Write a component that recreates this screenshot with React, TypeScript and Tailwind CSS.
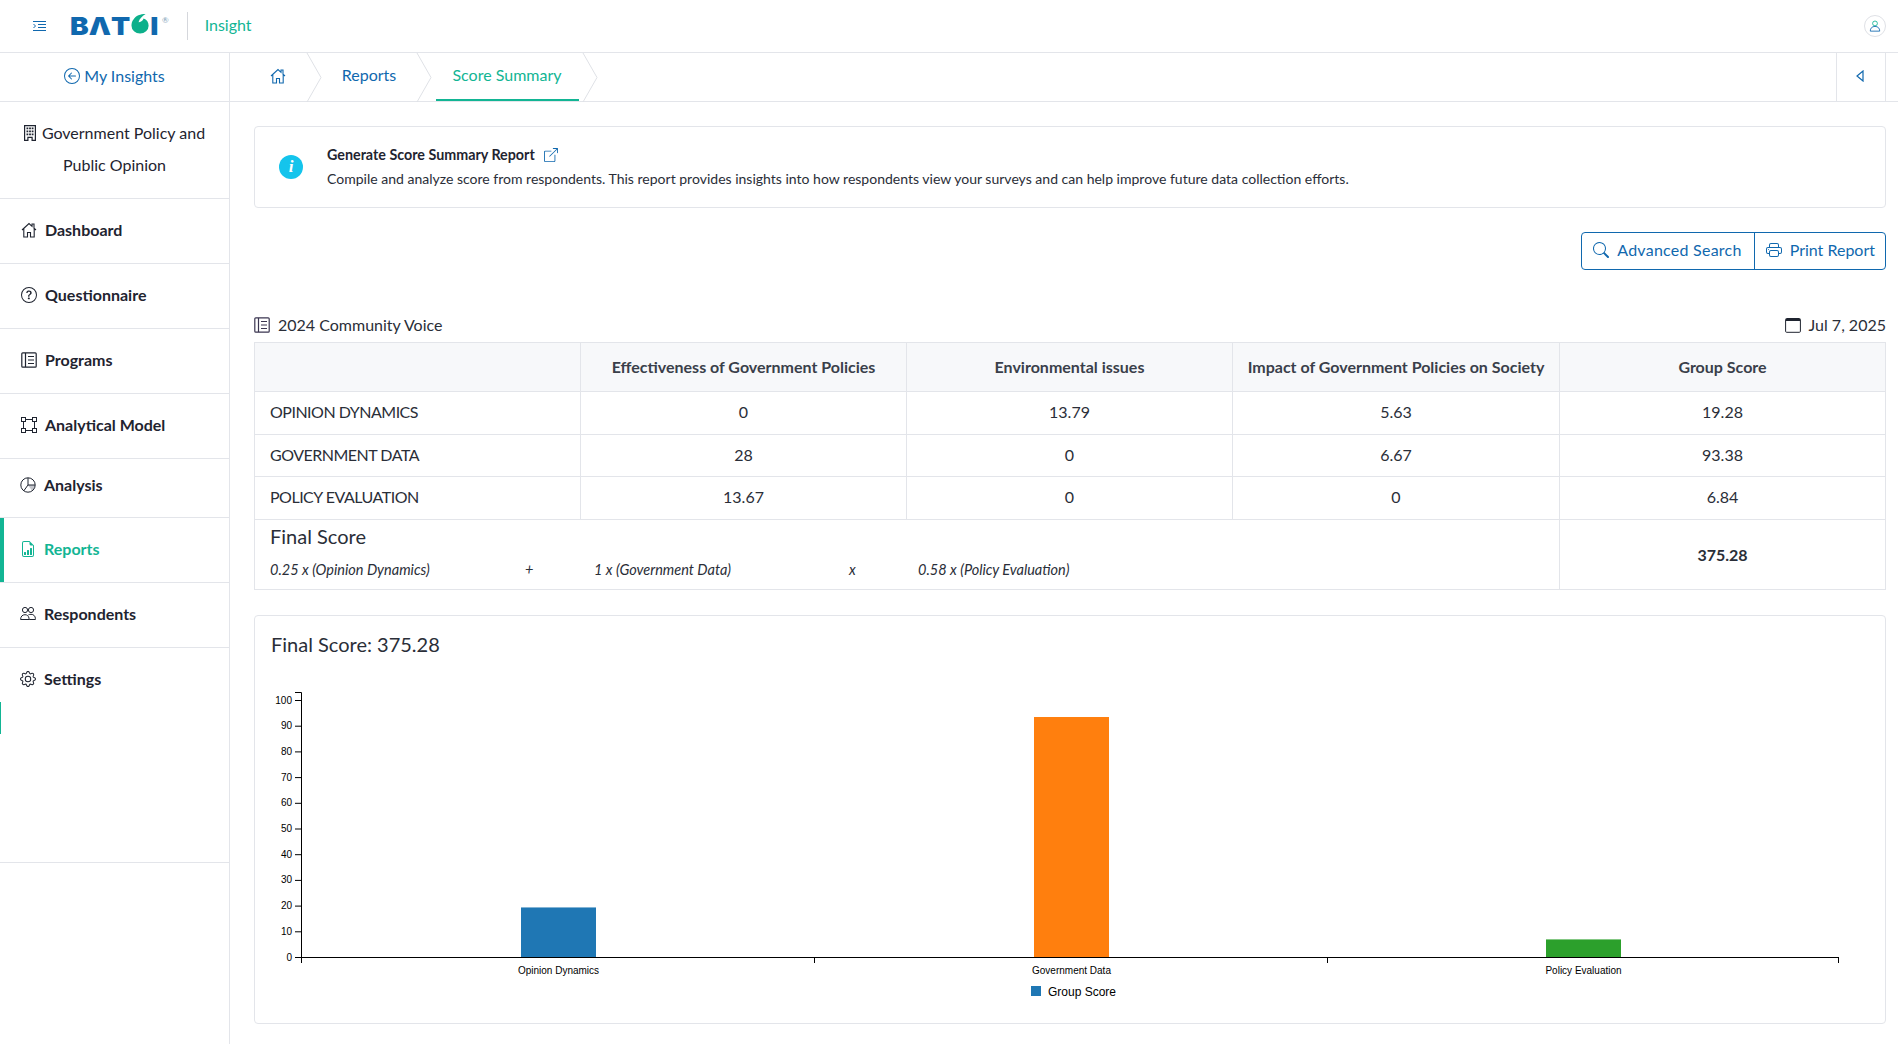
import { BsArrowLeftCircle, BsBoundingBox, BsBoxArrowUpRight, BsFileEarmarkBarGraph, BsGear, BsPrinter, BsQuestionCircle, BsSearch } from 'react-icons/bs'

const rows = [
  { name: 'OPINION DYNAMICS', a: '0', b: '13.79', c: '5.63', score: '19.28', h: 'h-[43px]' },
  { name: 'GOVERNMENT DATA', a: '28', b: '0', c: '6.67', score: '93.38', h: 'h-[42px]' },
  { name: 'POLICY EVALUATION', a: '13.67', b: '0', c: '0', score: '6.84', h: 'h-[43px]' },
]

function BookIcon({ className }: { className?: string }) {
  return (
    <svg viewBox="0 0 16 16" fill="none" stroke="currentColor" strokeWidth="1.2" className={className}>
      <rect x="0.8" y="0.8" width="14.4" height="14.4" rx="1" />
      <path d="M4.5 1v14M7 4.5h6M7 8h6M7 11.5h6" />
    </svg>
  )
}

function HomeIcon({ className }: { className?: string }) {
  return (
    <svg viewBox="0 0 16 16" fill="none" stroke="currentColor" strokeWidth="1.1" className={className}>
      <path d="M1 8l7-6.500 3 2.800V2h2v4.200L15 8M2.800 6.500V15h3.700v-4.500h3V15h3.700V6.500" />
    </svg>
  )
}

function BuildingIcon() {
  return (
    <svg viewBox="0 0 12 16" className="w-[12px] h-[16px] text-[#1f2430]" fill="currentColor">
      <path d="M0 0h12v16H7.500v-3h-3v3H0z M1.200 1.200v13.600h2.100v-3h5.400v3h2.100V1.200z" fillRule="evenodd" />
      <path d="M2.500 2.500h1.800v1.800H2.500zM5.100 2.500h1.800v1.800H5.100zM7.700 2.500h1.800v1.800H7.700zM2.500 5.500h1.800v1.800H2.500zM5.100 5.500h1.800v1.800H5.100zM7.700 5.500h1.800v1.800H7.700zM2.500 8.500h1.800v1.800H2.500zM5.100 8.500h1.800v1.800H5.100zM7.700 8.500h1.800v1.800H7.700z" />
    </svg>
  )
}

function PieIcon() {
  return (
    <svg viewBox="0 0 16 16" className="w-[16px] h-[16px]" fill="none" stroke="#1f2430" strokeWidth="1">
      <path d="M8 8h7a7 7 0 0 1-3 5.700z" fill="#c4c6cc" stroke="none" />
      <circle cx="8" cy="8" r="7.200" />
      <path d="M8 1v7h7M8 8l-4.200 5.800" />
    </svg>
  )
}

function PeopleIcon() {
  return (
    <svg viewBox="0 0 16 16" className="w-[16px] h-[16px]" fill="none" stroke="#1f2430" strokeWidth="1">
      <circle cx="5" cy="4" r="2.600" />
      <circle cx="11" cy="4" r="2.600" />
      <path d="M0.600 13.500c0-3 1.800-4.800 4.400-4.800 2.200 0 3.600 1.400 4 3.400v1.400z" />
      <path d="M8.400 8.900c.8-.4 1.600-.6 2.600-.6 2.600 0 4.400 1.800 4.400 4.400v.8H9.200" />
    </svg>
  )
}

function MenuIcon() {
  return (
    <svg viewBox="0 0 13 10" className="w-[13px] h-[10px] text-[#1068ae]" fill="none" stroke="currentColor" strokeWidth="1">
      <path d="M0 .5h13M5 3.500h8M5 6.500h8M0 9.500h13M.5 3l2 2-2 2" />
    </svg>
  )
}

function NavItem({ icon, label, active, h, pad, noBorder }: { icon: React.ReactNode; label: string; active?: boolean; h: string; pad: string; noBorder?: boolean }) {
  return (
    <div className={`${h} ${pad} ${noBorder ? '' : 'border-b border-[#e3e5ea]'} relative flex items-center gap-[8px] text-[16px] font-bold ${active ? 'text-[#12b594]' : 'text-[#1f2430]'}`}>
      {active && <div className="absolute left-0 top-0 bottom-0 w-[4px] bg-[#12b594]" />}
      <span className="w-[17px] flex justify-center">{icon}</span>
      {label}
    </div>
  )
}

function Chevron() {
  return (
    <svg viewBox="0 0 16 49" className="w-[16px] h-[49px] shrink-0 text-[#dfe1e6]" fill="none" stroke="currentColor" strokeWidth="1">
      <path d="M1 0l14 24.500L1 49" />
    </svg>
  )
}

function ScoreChart() {
  const x0 = 46
  const y0 = 267
  const bars = [
    { name: 'Opinion Dynamics', v: 19.28, color: '#1f77b4', c: 303.5 },
    { name: 'Government Data', v: 93.38, color: '#ff7f0e', c: 816.5 },
    { name: 'Policy Evaluation', v: 6.84, color: '#2ca02c', c: 1328.5 },
  ]
  const ticks = [0, 10, 20, 30, 40, 50, 60, 70, 80, 90, 100]
  return (
    <svg viewBox="0 0 1600 320" className="w-[1600px] h-[320px]" style={{ fontFamily: '"Liberation Sans", Arial, sans-serif' }}>
      {bars.map((b) => (
        <rect key={b.name} x={b.c - 37.5} y={y0 - b.v * 2.57} width={75} height={b.v * 2.57} fill={b.color} />
      ))}
      <path d={`M${x0 - 6} 2.500H${x0 + 0.5}V${y0 + 6}`} fill="none" stroke="#000" />
      <path d={`M${x0 - 6} ${y0 + 0.5}H1584`} fill="none" stroke="#000" />
      {[560, 1073, 1584].map((x) => (
        <path key={x} d={`M${x - 0.5} ${y0}v6`} stroke="#000" />
      ))}
      {ticks.map((t) => (
        <g key={t}>
          <path d={`M${x0 - 6} ${y0 + 0.5 - t * 2.57}H${x0}`} stroke="#000" />
          <text x={x0 - 9} y={y0 + 3.5 - t * 2.57} textAnchor="end" fontSize="10" fill="#000">{t}</text>
        </g>
      ))}
      {bars.map((b) => (
        <text key={b.name} x={b.c} y={y0 + 17} textAnchor="middle" fontSize="10" fill="#000">{b.name}</text>
      ))}
      <rect x="776" y="296" width="10" height="10" fill="#1f77b4" />
      <text x="793" y="306" fontSize="12" fill="#000">Group Score</text>
    </svg>
  )
}

export default function App() {
  return (
    <div className="h-[1044px] w-[1898px] overflow-hidden flex flex-col bg-white text-[#2a2e38] font-['Lato',sans-serif]">
      {/* Header */}
      <div className="h-[53px] shrink-0 flex items-center border-b border-[#e3e5ea] pl-[33px] pr-[12px]">
        <MenuIcon />
        <div className="ml-[24px] w-[92px] shrink-0 flex items-center text-[#1068ae] font-black text-[25px] leading-none font-['Inter',sans-serif] scale-x-[1.12] origin-left">
          <span>BΛT</span>
          <svg viewBox="0 0 20 24" className="w-[18px] h-[22px] -mt-[4px]">
            <path d="M1 14a8.500 8.500 0 1 0 17 0c0-4-2-7-5-8-1 3-3 4-5 4 1-4 4-7 7-9-5 0-10 2-12 6-1.400 2-2 4-2 7z" fill="#0db08b" />
          </svg>
          <span>I</span>
        </div>
        <span className="text-[#7f9fb8] text-[8px] leading-none -mt-[12px]">®</span>
        <div className="ml-[18px] w-px h-[28px] bg-[#d5d7dc]" />
        <span className="ml-[17px] pb-[2px] text-[#12b594] text-[16px]">Insight</span>
        <div className="ml-auto w-[22px] h-[22px] rounded-full border border-[#dfe1e6] flex items-center justify-center">
          <svg viewBox="0 0 14 14" className="w-[12px] h-[12px]" fill="none" strokeWidth="1">
            <circle cx="7" cy="4" r="2.800" stroke="#12b594" />
            <path d="M1.500 13c0-3.500 2-5.500 5.500-5.500s5.500 2 5.500 5.500z" stroke="#1068ae" />
          </svg>
        </div>
      </div>

      <div className="flex-1 flex min-h-0">
        {/* Sidebar */}
        <div className="w-[230px] shrink-0 border-r border-[#e3e5ea] flex flex-col">
          <div className="h-[49px] shrink-0 pb-[2px] flex items-center justify-center gap-[4px] border-b border-[#e3e5ea] text-[#1068ae] text-[16px]">
            <BsArrowLeftCircle className="w-[16px] h-[16px]" />
            My Insights
          </div>
          <div className="h-[97px] shrink-0 pb-[2px] border-b border-[#e3e5ea] flex flex-col items-center justify-center text-[16px] leading-[32px] text-[#1f2430]">
            <div className="flex items-center gap-[6px]"><BuildingIcon />Government Policy and</div>
            <div>Public Opinion</div>
          </div>
          <NavItem h="h-[65px]" pad="pl-[20px] pb-[2px]" label="Dashboard" icon={<HomeIcon className="w-[16px] h-[16px]" />} />
          <NavItem h="h-[65px]" pad="pl-[20px] pb-[2px]" label="Questionnaire" icon={<BsQuestionCircle className="w-[16px] h-[16px]" />} />
          <NavItem h="h-[65px]" pad="pl-[20px] pb-[2px]" label="Programs" icon={<BookIcon className="w-[16px] h-[16px]" />} />
          <NavItem h="h-[65px]" pad="pl-[20px] pb-[2px]" label="Analytical Model" icon={<BsBoundingBox className="w-[16px] h-[16px]" />} />
          <NavItem h="h-[59px]" pad="pl-[19px] pb-[7px]" label="Analysis" icon={<PieIcon />} />
          <NavItem h="h-[65px]" pad="pl-[19px] pb-[2px]" active label="Reports" icon={<BsFileEarmarkBarGraph className="w-[16px] h-[16px]" />} />
          <NavItem h="h-[65px]" pad="pl-[19px] pb-[2px]" label="Respondents" icon={<PeopleIcon />} />
          <NavItem h="h-[65px]" pad="pl-[19px] pb-[3px]" noBorder label="Settings" icon={<BsGear className="w-[16px] h-[16px]" />} />
          <div className="h-[150px] shrink-0 border-b border-[#e3e5ea] relative">
            <div className="absolute left-0 top-[-11px] w-px h-[32px] bg-[#12b594]" />
          </div>
        </div>

        {/* Main */}
        <div className="flex-1 min-w-0 flex flex-col">
          <div className="h-[49px] shrink-0 border-b border-[#e3e5ea] flex items-center pr-[12px]">
            <div className="w-[76px] pb-[3px] flex justify-center pl-[20px]"><HomeIcon className="w-[16px] h-[16px] text-[#1068ae]" /></div>
            <Chevron />
            <span className="w-[94px] pb-[4px] text-center text-[#1068ae] text-[16px]">Reports</span>
            <Chevron />
            <div className="relative h-full w-[150px] pb-[4px] flex items-center justify-center text-[#12b594] text-[16px]">
              Score Summary
              <div className="absolute bottom-0 left-[4px] right-[3px] h-[2px] bg-[#12b594]" />
            </div>
            <Chevron />
            <div className="ml-auto w-[50px] h-full pb-[2px] pr-[2px] border-x border-[#e3e5ea] flex items-center justify-center">
              <svg viewBox="0 0 8 12" className="w-[8px] h-[12px]" fill="none" stroke="#1068ae" strokeWidth="1.200"><path d="M7 1v10L1 6z" /></svg>
            </div>
          </div>

          <div className="pl-[24px] pr-[12px] pt-[24px]">
            <div className="h-[82px] border border-[#e3e5ea] rounded-[4px] flex items-center pl-[24px]">
              <div className="w-[24px] h-[24px] rounded-full bg-[#14c4ec] flex items-center justify-center text-white italic font-bold text-[17px] font-['Liberation_Serif',serif]">i</div>
              <div className="ml-[24px]">
                <div className="flex items-center gap-[9px] text-[14.3px] font-bold text-[#1f2430] leading-[24px]">
                  Generate Score Summary Report
                  <BsBoxArrowUpRight className="w-[14px] h-[14px] text-[#1068ae]" />
                </div>
                <div className="text-[14.03px] leading-[24px] text-[#2a2e38]">Compile and analyze score from respondents. This report provides insights into how respondents view your surveys and can help improve future data collection efforts.</div>
              </div>
            </div>

            <div className="mt-[24px] flex justify-end">
              <div className="h-[38px] flex border border-[#1068ae] rounded-[4px] text-[#1068ae] text-[16px]">
                <div className="flex items-center gap-[8px] pb-[2px] pl-[11px] pr-[12px] border-r border-[#1068ae] tracking-[0.25px]"><BsSearch className="w-[16px] h-[16px]" />Advanced Search</div>
                <div className="flex items-center gap-[8px] pb-[2px] pl-[11px] pr-[10px]"><BsPrinter className="w-[16px] h-[16px]" />Print Report</div>
              </div>
            </div>

            <div className="mt-[41px] mb-[3px] h-[28px] flex items-center justify-between text-[16px]">
              <div className="flex items-center gap-[8px]"><BookIcon className="w-[16px] h-[16px] text-[#3a3550]" />2024 Community Voice</div>
              <div className="flex items-center gap-[8px]">
                <svg viewBox="0 0 16 16" className="w-[16px] h-[16px]" fill="none" stroke="#1f2430"><rect x="0.600" y="1.500" width="14.800" height="13.800" rx="1" /><path d="M1 3h14" strokeWidth="2" /></svg>
                Jul 7, 2025
              </div>
            </div>

            <table className="w-full table-fixed border-collapse text-[16px]">
              <colgroup>
                <col className="w-[326px]" />
                <col className="w-[326px]" />
                <col className="w-[326px]" />
                <col className="w-[327px]" />
                <col />
              </colgroup>
              <thead>
                <tr className="h-[49px] bg-[#f7f8fa] font-bold text-[#3a3f4a]">
                  <th className="border border-[#e3e5ea]" />
                  <th className="border border-[#e3e5ea] font-bold">Effectiveness of Government Policies</th>
                  <th className="border border-[#e3e5ea] font-bold">Environmental issues</th>
                  <th className="border border-[#e3e5ea] font-bold">Impact of Government Policies on Society</th>
                  <th className="border border-[#e3e5ea] font-bold">Group Score</th>
                </tr>
              </thead>
              <tbody>
                {rows.map((r) => (
                  <tr key={r.name} className={r.h}>
                    <td className="border border-[#e3e5ea] pl-[15px] pb-[2px] tracking-[-0.5px]">{r.name}</td>
                    <td className="border border-[#e3e5ea] pb-[2px] text-center">{r.a}</td>
                    <td className="border border-[#e3e5ea] pb-[2px] text-center">{r.b}</td>
                    <td className="border border-[#e3e5ea] pb-[2px] text-center">{r.c}</td>
                    <td className="border border-[#e3e5ea] pb-[2px] text-center">{r.score}</td>
                  </tr>
                ))}
                <tr className="h-[70px]">
                  <td colSpan={4} className="border border-[#e3e5ea] pl-[15px] align-top">
                    <div className="text-[20px] leading-[24px] mt-[4px]">Final Score</div>
                    <div className="mt-[12px] grid grid-cols-[255px_69px_255px_69px_1fr] text-[14.5px] italic leading-[20px]">
                      <span>0.25 x (Opinion Dynamics)</span>
                      <span>+</span>
                      <span>1 x (Government Data)</span>
                      <span>x</span>
                      <span>0.58 x (Policy Evaluation)</span>
                    </div>
                  </td>
                  <td className="border border-[#e3e5ea] text-center font-bold">375.28</td>
                </tr>
              </tbody>
            </table>

            <div className="mt-[25px] h-[409px] border border-[#e3e5ea] rounded-[4px] overflow-hidden">
              <div className="pl-[16px] pt-[16px] text-[20px] leading-[24px]">Final Score: 375.28</div>
              <div className="mt-[34px]"><ScoreChart /></div>
            </div>
          </div>
        </div>
      </div>
    </div>
  )
}
